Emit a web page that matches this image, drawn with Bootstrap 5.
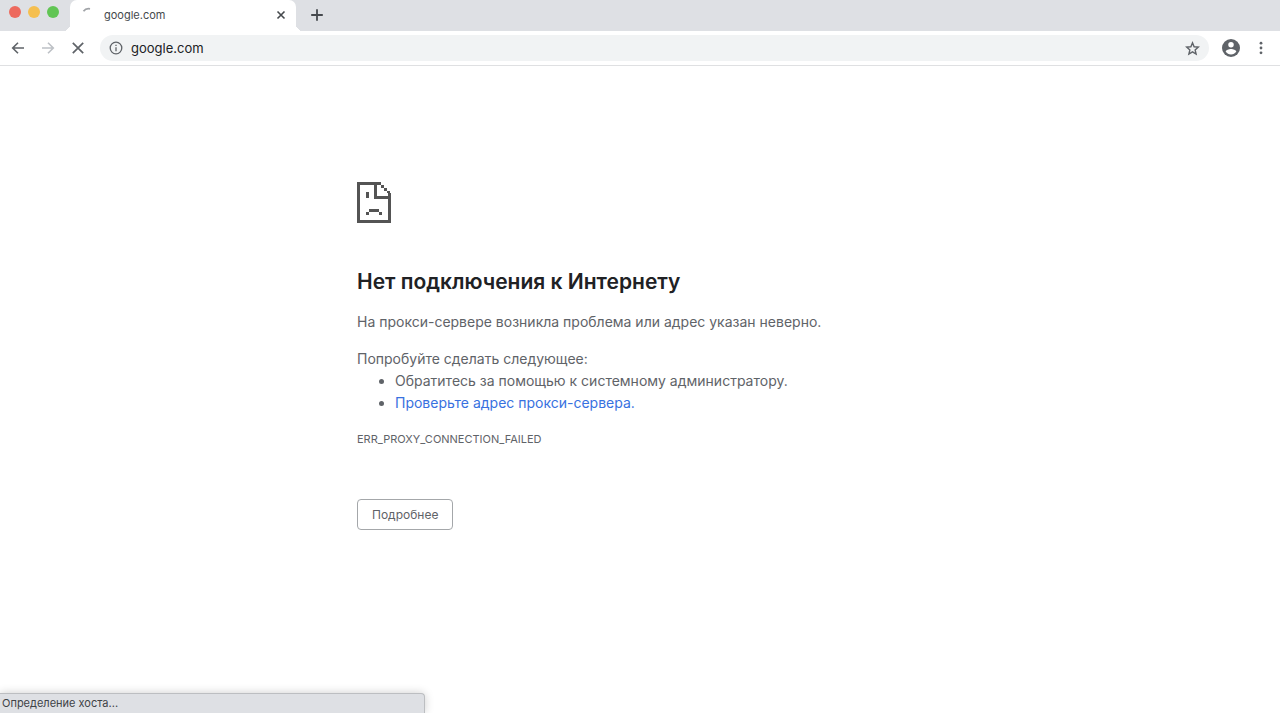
<!DOCTYPE html>
<html lang="ru">
<head>
<meta charset="utf-8">
<meta name="viewport" content="width=device-width, initial-scale=1">
<title>google.com</title>
<link href="https://cdn.jsdelivr.net/npm/bootstrap@5.3.0/dist/css/bootstrap.min.css" rel="stylesheet">
<script src="https://cdn.jsdelivr.net/npm/bootstrap@5.3.0/dist/js/bootstrap.bundle.min.js" defer></script>
<style>
body { font-family: Inter, "Liberation Sans", sans-serif; color: #5f6368; font-size: 14px; line-height: 23px; }
svg { display: block; }
.tab-strip { background: #dee0e4; height: 31px; }
.lights { gap: 7px; padding: 6px 11px 0 9px; }
.light { width: 12px; height: 12px; border-radius: 50%; }
.light-red { background: #ed6a5e; }
.light-yellow { background: #f5bf4f; }
.light-green { background: #61c554; }
.page-tab { position: relative; width: 226px; background: #fff; border-radius: 7px 7px 0 0; padding: 0 9px 1px 10px; font-size: 11px; line-height: 16px; color: #45494d; }
.page-tab::before, .page-tab::after { content: ""; position: absolute; bottom: 0; width: 7px; height: 7px; }
.page-tab::before { left: -7px; background: radial-gradient(circle at 0 0, transparent 7px, #fff 7px); }
.page-tab::after { right: -7px; background: radial-gradient(circle at 100% 0, transparent 7px, #fff 7px); }
.tool-btn { background: none; border: 0; padding: 0; color: #5f6368; }
.tool-btn:disabled { color: #bdc1c6; }
.new-tab { margin-left: 15px; padding-bottom: 1px; }
.toolbar { height: 35px; gap: 14px; padding: 0 11px 0 10px; border-bottom: 1px solid #dfe0e2; }
.omnibox { height: 26px; border-radius: 13px; background: #f1f3f4; padding: 0 9px; gap: 8px; }
.omnibox input { border: 0; background: none; outline: 0; padding: 0; font-size: 13px; color: #202124; min-width: 0; }
.toolbar-end { gap: 12px; margin-left: -2px; }
.error-page { max-width: 566px; padding-top: 116px; }
.error-page h1 { font-size: 21px; line-height: 28px; font-weight: 600; color: #202124; margin: 45px 0 14px; }
.error-page p { margin-bottom: 14px; }
.error-page ul { padding-left: 38px; margin-bottom: 15px; line-height: 22px; }
.error-page a { color: #3871e0; text-decoration: none; }
.error-code { font-size: 11px; line-height: 20px; }
.details-btn { --bs-btn-font-size: 12px; --bs-btn-line-height: 19px; --bs-btn-padding-x: 14px; --bs-btn-padding-y: 5px; --bs-btn-border-radius: 4px; --bs-btn-color: #5f6368; --bs-btn-border-color: #a4a7aa; --bs-btn-hover-color: #202124; --bs-btn-hover-bg: #f1f3f4; margin-top: 50px; }
.status-bubble { width: 425px; max-width: 100%; background: #dee0e4; border: 1px solid #bcbec1; border-width: 1px 1px 0 0; border-top-right-radius: 4px; box-shadow: 0 0 10px #0003; padding: 0 2px; font-size: 11px; line-height: 19px; color: #3f4347; }
</style>
</head>
<body class="d-flex flex-column min-vh-100 bg-white">
<header>
  <div class="tab-strip d-flex">
    <div class="lights d-flex"><span class="light light-red"></span><span class="light light-yellow"></span><span class="light light-green"></span></div>
    <div class="page-tab d-flex align-items-center">
      <svg width="16" height="16" viewBox="0 0 16 16" fill="none" stroke="#a0a3a7" stroke-width="1.8" aria-hidden="true"><path d="M3.500 4.200Q6 .9 10 1.800"/></svg>
      <span class="ms-2 flex-grow-1">google.com</span>
      <button class="tool-btn" aria-label="Закрыть вкладку"><svg width="12" height="12" viewBox="0 0 12 12" stroke="#45494d" stroke-width="1.6"><path d="M2.500 2.500l7 7m0-7l-7 7"/></svg></button>
    </div>
    <button class="tool-btn new-tab" aria-label="Новая вкладка"><svg width="12" height="12" viewBox="0 0 12 12" stroke="#45494d" stroke-width="1.8"><path d="M6 .2v11.600M.2 6h11.600"/></svg></button>
  </div>
  <div class="toolbar d-flex align-items-center">
    <button class="tool-btn" aria-label="Назад"><svg width="16" height="16" viewBox="0 0 16 16" fill="none" stroke="currentColor" stroke-width="1.6"><path d="M14 8H3M8 2.700L2.700 8 8 13.300"/></svg></button>
    <button class="tool-btn" aria-label="Вперёд" disabled><svg width="16" height="16" viewBox="0 0 16 16" fill="none" stroke="currentColor" stroke-width="1.6"><path d="M2 8h11M8 2.700L13.300 8 8 13.300"/></svg></button>
    <button class="tool-btn" aria-label="Остановить загрузку"><svg width="16" height="16" viewBox="0 0 16 16" stroke="currentColor" stroke-width="1.7"><path d="M2.800 2.800l10.400 10.400m0-10.400L2.800 13.200"/></svg></button>
    <div class="omnibox d-flex align-items-center flex-grow-1">
      <svg width="14" height="14" viewBox="0 0 14 14" fill="none" stroke="#5f6368" stroke-width="1.3" aria-hidden="true"><circle cx="7" cy="7" r="5.800"/><path d="M7 6.200v4M7 3.700v1.400"/></svg>
      <input class="flex-grow-1" type="text" value="google.com" aria-label="Адресная строка">
      <button class="tool-btn" aria-label="Добавить в закладки"><svg width="15" height="15" viewBox="0 0 24 24" fill="none" stroke="currentColor" stroke-width="2.200"><path d="M12 3l2.600 6.200 6.700.6-5.100 4.400 1.600 6.600-5.800-3.500-5.800 3.500 1.600-6.600-5.100-4.400 6.700-.6z"/></svg></button>
    </div>
    <div class="toolbar-end d-flex align-items-center">
      <button class="tool-btn" aria-label="Профиль"><svg width="20" height="20" viewBox="0 0 24 24"><circle cx="12" cy="12" r="10.800" fill="#5f6368"/><circle cx="12" cy="8.200" r="3.300" fill="#fff"/><path d="M12 13.300c-2.600 0-6.300 1.300-6.300 3.200 1.400 2 3.700 3.200 6.300 3.200s4.900-1.200 6.300-3.200c0-1.900-3.700-3.200-6.300-3.200z" fill="#fff"/></svg></button>
      <button class="tool-btn px-1" aria-label="Меню"><svg width="8" height="14" viewBox="0 0 8 14" fill="currentColor"><circle cx="4" cy="2.200" r="1.400"/><circle cx="4" cy="7" r="1.400"/><circle cx="4" cy="11.800" r="1.400"/></svg></button>
    </div>
  </div>
</header>
<main class="flex-grow-1">
  <div class="error-page mx-auto">
    <svg width="34" height="41" viewBox="0 0 34 41" fill="#545454" shape-rendering="crispEdges" aria-hidden="true"><path d="M0 0h24v3H3v35h28V11h3v30H0zM17 3h3v11h11v3H17zM24 3h3v3h-3zM27 6h3v3h-3zM30 9h3v2h-3zM9 10h3v6H9zM12 27h10v3H12zM9 30h3v3H9zM22 30h3v3h-3z"/></svg>
    <h1>Нет подключения к Интернету</h1>
    <p>На прокси-сервере возникла проблема или адрес указан неверно.</p>
    <p class="mb-0">Попробуйте сделать следующее:</p>
    <ul>
      <li>Обратитесь за помощью к системному администратору.</li>
      <li><a href="#proxy">Проверьте адрес прокси-сервера.</a></li>
    </ul>
    <div class="error-code">ERR_PROXY_CONNECTION_FAILED</div>
    <button class="btn details-btn">Подробнее</button>
  </div>
</main>
<footer class="status-bubble">Определение хоста...</footer>
</body>
</html>
